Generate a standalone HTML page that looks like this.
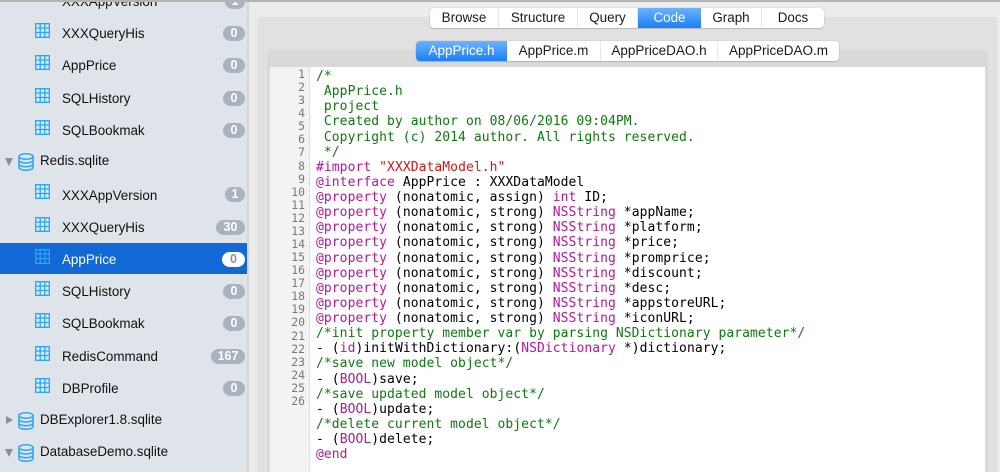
<!DOCTYPE html>
<html><head><meta charset="utf-8">
<style>
*{box-sizing:border-box;margin:0;padding:0}
html,body{width:1000px;height:472px;overflow:hidden;background:#ececec}
body{position:relative;font-family:"Liberation Sans",sans-serif;color:#111}
.abs{position:absolute}
#top{left:0;top:0;width:1000px;height:2px;background:#b4b4b4;z-index:9}
#side{left:0;top:0;width:247px;height:472px;background:#dfe3ea}
#sb{left:247px;top:0;width:2px;height:472px;background:#d6d6d6}
#outer{left:257px;top:17px;width:741px;height:460px;background:#e1e1e1;border-radius:4px 4px 0 0}
#inner{left:267px;top:50px;width:721px;height:430px;background:#d9d9d9;border-radius:4px 4px 0 0}
#white{left:270px;top:67px;width:715px;height:405px;background:#fff}
#gut{left:270px;top:67px;width:40px;height:405px;background:#f3f3f3;border-right:1px dotted #ccc}
.seg{display:flex;height:20px;background:#fff;border-radius:4px;box-shadow:0 0 1px rgba(0,0,0,.3),0 1px 1px rgba(0,0,0,.14);font-size:13.4px;line-height:20px;overflow:hidden;color:#1a1a1a}
.seg div{text-align:center;border-right:1px solid #e8e8e8}
.seg div:last-child{border-right:0}
.seg .on{background:linear-gradient(#6cb3fb,#1b7ff8);color:#fff;border-right:0}
#seg1{left:430px;top:8px;width:394px}
#seg2{left:416px;top:41px;width:423px;font-size:13.5px}
.row{position:absolute;left:0;width:247px;height:32px;font-size:13.4px}
.row.sel{background:#1268d5;color:#fff;height:31px}
.row svg{position:absolute;left:35px;top:6px}
.row .t{position:absolute;left:62px;top:8px;line-height:18px;white-space:nowrap}
.b{position:absolute;right:2px;top:9px;height:15px;border-radius:8px;background:#a9b2bf;color:#fff;font-size:12.5px;font-weight:bold;line-height:15px;text-align:center;width:22px}
.sel .b{background:#fff;color:#8a93a0}
.db{position:absolute;left:0;width:247px;height:32px;font-size:13.4px}
.db svg.c{position:absolute;left:18px;top:3px}
.db .t{position:absolute;left:40px;top:2px;line-height:18px;white-space:nowrap}
.tri-d{position:absolute;left:5px;top:8px;width:0;height:0;border-left:4px solid transparent;border-right:4px solid transparent;border-top:8px solid #8e8e8e}
.tri-r{position:absolute;left:6px;top:7px;width:0;height:0;border-top:4.5px solid transparent;border-bottom:4.5px solid transparent;border-left:7px solid #8e8e8e}
#nums{left:270px;top:68px;width:35px;text-align:right;font:11.4px/13.08px "DejaVu Sans Mono",monospace;color:#777}
#code{left:316px;top:69px;font:13px/15.12px "DejaVu Sans Mono",monospace;letter-spacing:.065px;color:#000;white-space:pre}
.g{color:#0d7a0d}.m{color:#b5179e}.r{color:#d41616}
</style></head>
<body>
<svg width="0" height="0" style="position:absolute"><defs>
<symbol id="tb" viewBox="0 0 15 15"><rect width="15" height="15" fill="#d4ecfc"/><path d="M0 .7h15M0 5h15M0 9.500h15M0 14.300h15M.7 0v15M5.200 0v15M9.800 0v15M14.300 0v15" stroke="#2ba6f5" stroke-width="1.300" fill="none"/></symbol>
<symbol id="tbs" viewBox="0 0 15 15"><path d="M0 .7h15M0 5h15M0 9.500h15M0 14.300h15M.7 0v15M5.200 0v15M9.800 0v15M14.300 0v15" stroke="#2ba6f5" stroke-width="1.300" fill="none"/></symbol>
<symbol id="cy" viewBox="0 0 16 18"><ellipse cx="8" cy="3.500" rx="7" ry="2.700" fill="#d4ecfc" stroke="#2ba6f5" stroke-width="1.500"/><path d="M1 3.500v11c0 1.500 3 2.700 7 2.700s7-1.200 7-2.700v-11M1 7.300c0 1.500 3 2.700 7 2.700s7-1.200 7-2.700M1 11c0 1.500 3 2.700 7 2.700s7-1.200 7-2.700" fill="none" stroke="#2ba6f5" stroke-width="1.500"/></symbol>
</defs></svg>
<div class="abs" id="top"></div>
<div class="abs" id="side">
<div class="row" style="top:-15px"><svg width="15" height="15" style="top:0"><use href="#tb"/></svg><span class="t">XXXAppVersion</span><span class="b" style="width:20px">1</span></div>
<div class="row" style="top:17px"><svg width="15" height="15"><use href="#tb"/></svg><span class="t">XXXQueryHis</span><span class="b">0</span></div>
<div class="row" style="top:49px"><svg width="15" height="15"><use href="#tb"/></svg><span class="t">AppPrice</span><span class="b">0</span></div>
<div class="row" style="top:82px"><svg width="15" height="15"><use href="#tb"/></svg><span class="t">SQLHistory</span><span class="b">0</span></div>
<div class="row" style="top:114px"><svg width="15" height="15"><use href="#tb"/></svg><span class="t">SQLBookmak</span><span class="b">0</span></div>
<div class="db" style="top:150px"><span class="tri-d"></span><svg class="c" width="16" height="18"><use href="#cy"/></svg><span class="t">Redis.sqlite</span></div>
<div class="row" style="top:179px"><svg width="15" height="15" style="top:5px"><use href="#tb"/></svg><span class="t">XXXAppVersion</span><span class="b" style="width:20px;top:8px">1</span></div>
<div class="row" style="top:211px"><svg width="15" height="15"><use href="#tb"/></svg><span class="t">XXXQueryHis</span><span class="b" style="width:29px">30</span></div>
<div class="row sel" style="top:243px"><svg width="15" height="15"><use href="#tbs"/></svg><span class="t">AppPrice</span><span class="b" style="width:23px">0</span></div>
<div class="row" style="top:275px"><svg width="15" height="15"><use href="#tb"/></svg><span class="t">SQLHistory</span><span class="b">0</span></div>
<div class="row" style="top:307px"><svg width="15" height="15"><use href="#tb"/></svg><span class="t">SQLBookmak</span><span class="b">0</span></div>
<div class="row" style="top:340px"><svg width="15" height="15"><use href="#tb"/></svg><span class="t">RedisCommand</span><span class="b" style="width:34px">167</span></div>
<div class="row" style="top:372px"><svg width="15" height="15"><use href="#tb"/></svg><span class="t">DBProfile</span><span class="b">0</span></div>
<div class="db" style="top:409px"><span class="tri-r"></span><svg class="c" width="16" height="18"><use href="#cy"/></svg><span class="t">DBExplorer1.8.sqlite</span></div>
<div class="db" style="top:441px"><span class="tri-d"></span><svg class="c" width="16" height="18"><use href="#cy"/></svg><span class="t">DatabaseDemo.sqlite</span></div>
</div>
<div class="abs" id="sb"></div>
<div class="abs" id="outer"></div>
<div class="abs" id="inner"></div>
<div class="abs" id="white"></div>
<div class="abs" id="gut"></div>
<div class="abs seg" id="seg1"><div style="width:69px">Browse</div><div style="width:79px">Structure</div><div style="width:60px">Query</div><div class="on" style="width:63px">Code</div><div style="width:61px">Graph</div><div style="width:62px">Docs</div></div>
<div class="abs seg" id="seg2"><div class="on" style="width:91px">AppPrice.h</div><div style="width:94px">AppPrice.m</div><div style="width:117px">AppPriceDAO.h</div><div style="width:121px">AppPriceDAO.m</div></div>
<div class="abs" id="nums">1<br>2<br>3<br>4<br>5<br>6<br>7<br>8<br>9<br>10<br>11<br>12<br>13<br>14<br>15<br>16<br>17<br>18<br>19<br>20<br>21<br>22<br>23<br>24<br>25<br>26</div>
<div class="abs" id="code"><span class="g">/*
 AppPrice.h
 project
 Created by author on 08/06/2016 09:04PM.
 Copyright (c) 2014 author. All rights reserved.
 */</span>
<span class="m">#import</span> <span class="r">"XXXDataModel.h"</span>
<span class="m">@interface</span> AppPrice : XXXDataModel
<span class="m">@property</span> (nonatomic, assign) <span class="m">int</span> ID;
<span class="m">@property</span> (nonatomic, strong) <span class="m">NSString</span> *appName;
<span class="m">@property</span> (nonatomic, strong) <span class="m">NSString</span> *platform;
<span class="m">@property</span> (nonatomic, strong) <span class="m">NSString</span> *price;
<span class="m">@property</span> (nonatomic, strong) <span class="m">NSString</span> *promprice;
<span class="m">@property</span> (nonatomic, strong) <span class="m">NSString</span> *discount;
<span class="m">@property</span> (nonatomic, strong) <span class="m">NSString</span> *desc;
<span class="m">@property</span> (nonatomic, strong) <span class="m">NSString</span> *appstoreURL;
<span class="m">@property</span> (nonatomic, strong) <span class="m">NSString</span> *iconURL;
<span class="g">/*init property member var by parsing NSDictionary parameter*/</span>
- (<span class="m">id</span>)initWithDictionary:(<span class="m">NSDictionary</span> *)dictionary;
<span class="g">/*save new model object*/</span>
- (<span class="m">BOOL</span>)save;
<span class="g">/*save updated model object*/</span>
- (<span class="m">BOOL</span>)update;
<span class="g">/*delete current model object*/</span>
- (<span class="m">BOOL</span>)delete;
<span class="m">@end</span></div>
</body></html>
